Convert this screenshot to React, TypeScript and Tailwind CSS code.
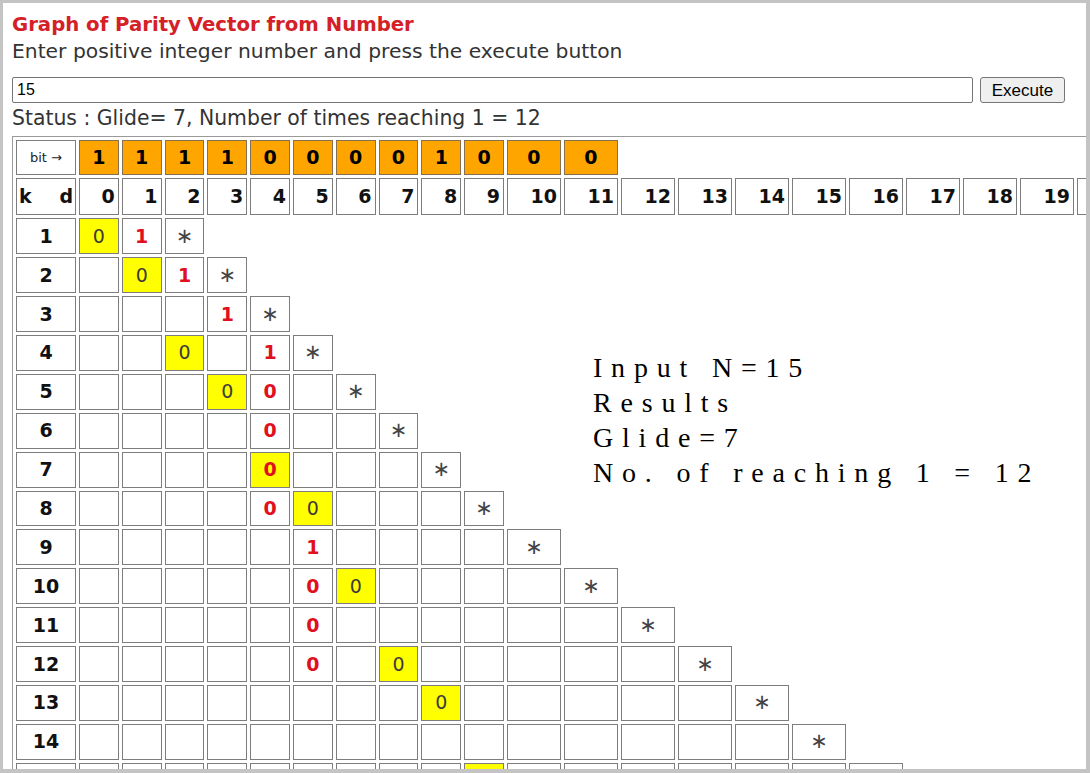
import React from "react";

type Kind = "y0" | "r0" | "r1" | "yr0" | "star";

const body: Record<number, Record<number, Kind>> = {
  1: { 0: "y0", 1: "r1", 2: "star" },
  2: { 1: "y0", 2: "r1", 3: "star" },
  3: { 3: "r1", 4: "star" },
  4: { 2: "y0", 4: "r1", 5: "star" },
  5: { 3: "y0", 4: "r0", 6: "star" },
  6: { 4: "r0", 7: "star" },
  7: { 4: "yr0", 8: "star" },
  8: { 4: "r0", 5: "y0", 9: "star" },
  9: { 5: "r1", 10: "star" },
  10: { 5: "r0", 6: "y0", 11: "star" },
  11: { 5: "r0", 12: "star" },
  12: { 5: "r0", 7: "y0", 13: "star" },
  13: { 8: "y0", 14: "star" },
  14: { 15: "star" },
  15: { 9: "y0", 16: "star" },
  16: { 17: "star" },
};

const bits = [1, 1, 1, 1, 0, 0, 0, 0, 1, 0, 0, 0];
const NUMCOLS = 21;

const B = "border border-[#7d7d7d] flex items-center";

function BodyCell({ kind }: { kind?: Kind }) {
  if (kind === "y0")
    return <div className={B + " justify-center bg-[#ffff00] font-normal text-[#3c3c3c]"}>0</div>;
  if (kind === "yr0")
    return <div className={B + " justify-center bg-[#ffff00] font-bold text-[#e0101e]"}>0</div>;
  if (kind === "r0")
    return <div className={B + " justify-center bg-white font-bold text-[#e0101e]"}>0</div>;
  if (kind === "r1")
    return <div className={B + " justify-center bg-white font-bold text-[#e0101e]"}>1</div>;
  if (kind === "star")
    return <div className={B + " justify-center bg-white font-normal text-[#444] text-[21px]"}>∗</div>;
  return <div className={B + " bg-white"} />;
}

export default function App() {
  const rows = Object.keys(body).map((k) => Number(k));
  return (
    <div className="relative w-[1090px] h-[773px] overflow-hidden bg-white border-l-[3px] border-t-[3px] border-r-4 border-b-4 border-[#c4c4c4] pl-[9px] pt-[9px] text-[#333] font-['DejaVu_Sans',Verdana,sans-serif]">
      <h1 className="text-[19.7px] leading-[26px] font-bold text-[#d42026]">Graph of Parity Vector from Number</h1>
      <p className="text-[20.3px] leading-[26px]">Enter positive integer number and press the execute button</p>
      <div className="mt-[13px] flex gap-[7px] h-[26px]">
        <input
          readOnly
          value="15"
          className="w-[961px] h-[26px] border border-[#767676] rounded-[2px] px-[4px] text-[16px] text-black bg-white font-['Liberation_Sans',Arial,sans-serif] outline-none"
        />
        <button className="w-[85px] h-[26px] border border-[#767676] rounded-[3px] bg-[#efefef] text-[17px] text-black font-['Liberation_Sans',Arial,sans-serif]">
          Execute
        </button>
      </div>
      <p className="mt-[2px] text-[20.4px] leading-[26px]">Status : Glide= 7, Number of times reaching 1 = 12</p>
      <div className="mt-[5px] w-max border-l border-t border-[#9a9a9a] p-[3px]">
        <div className="grid grid-cols-[60px_repeat(10,39.8px)_repeat(11,54px)] grid-rows-[35.3px_37px] auto-rows-[35.9px] gap-[3px] text-[19px] leading-none text-[#111] font-bold">
          {/* bit row */}
          <div className={B + " justify-center bg-white font-normal text-[13px] text-[#222]"}>bit →</div>
          {Array.from({ length: NUMCOLS }).map((_, i) =>
            i < bits.length ? (
              <div key={i} className="border border-[#857050] bg-[#ffa500] flex items-center justify-center font-bold text-black">
                {bits[i]}
              </div>
            ) : (
              <div key={i} />
            )
          )}
          {/* k d row */}
          <div className={B + " justify-between bg-white px-[2px]"}>
            <span>k</span>
            <span>d</span>
          </div>
          {Array.from({ length: NUMCOLS }).map((_, i) => (
            <div key={i} className={B + " justify-end bg-white pr-[3px]"}>
              {i}
            </div>
          ))}
          {/* body rows */}
          {rows.map((k) => (
            <React.Fragment key={k}>
              <div className={B + " justify-center bg-white font-bold"}>{k}</div>
              {Array.from({ length: NUMCOLS }).map((_, c) =>
                c <= k + 1 ? <BodyCell key={c} kind={body[k][c]} /> : <div key={c} />
              )}
            </React.Fragment>
          ))}
        </div>
      </div>
      <div className="absolute left-[590px] top-[346.5px] text-[28px] leading-[35px] tracking-[8.8px] text-black font-['Liberation_Serif','Times_New_Roman',serif]">
        <div>Input N=15</div>
        <div>Results</div>
        <div>Glide=7</div>
        <div>No. of reaching 1 = 12</div>
      </div>
    </div>
  );
}
